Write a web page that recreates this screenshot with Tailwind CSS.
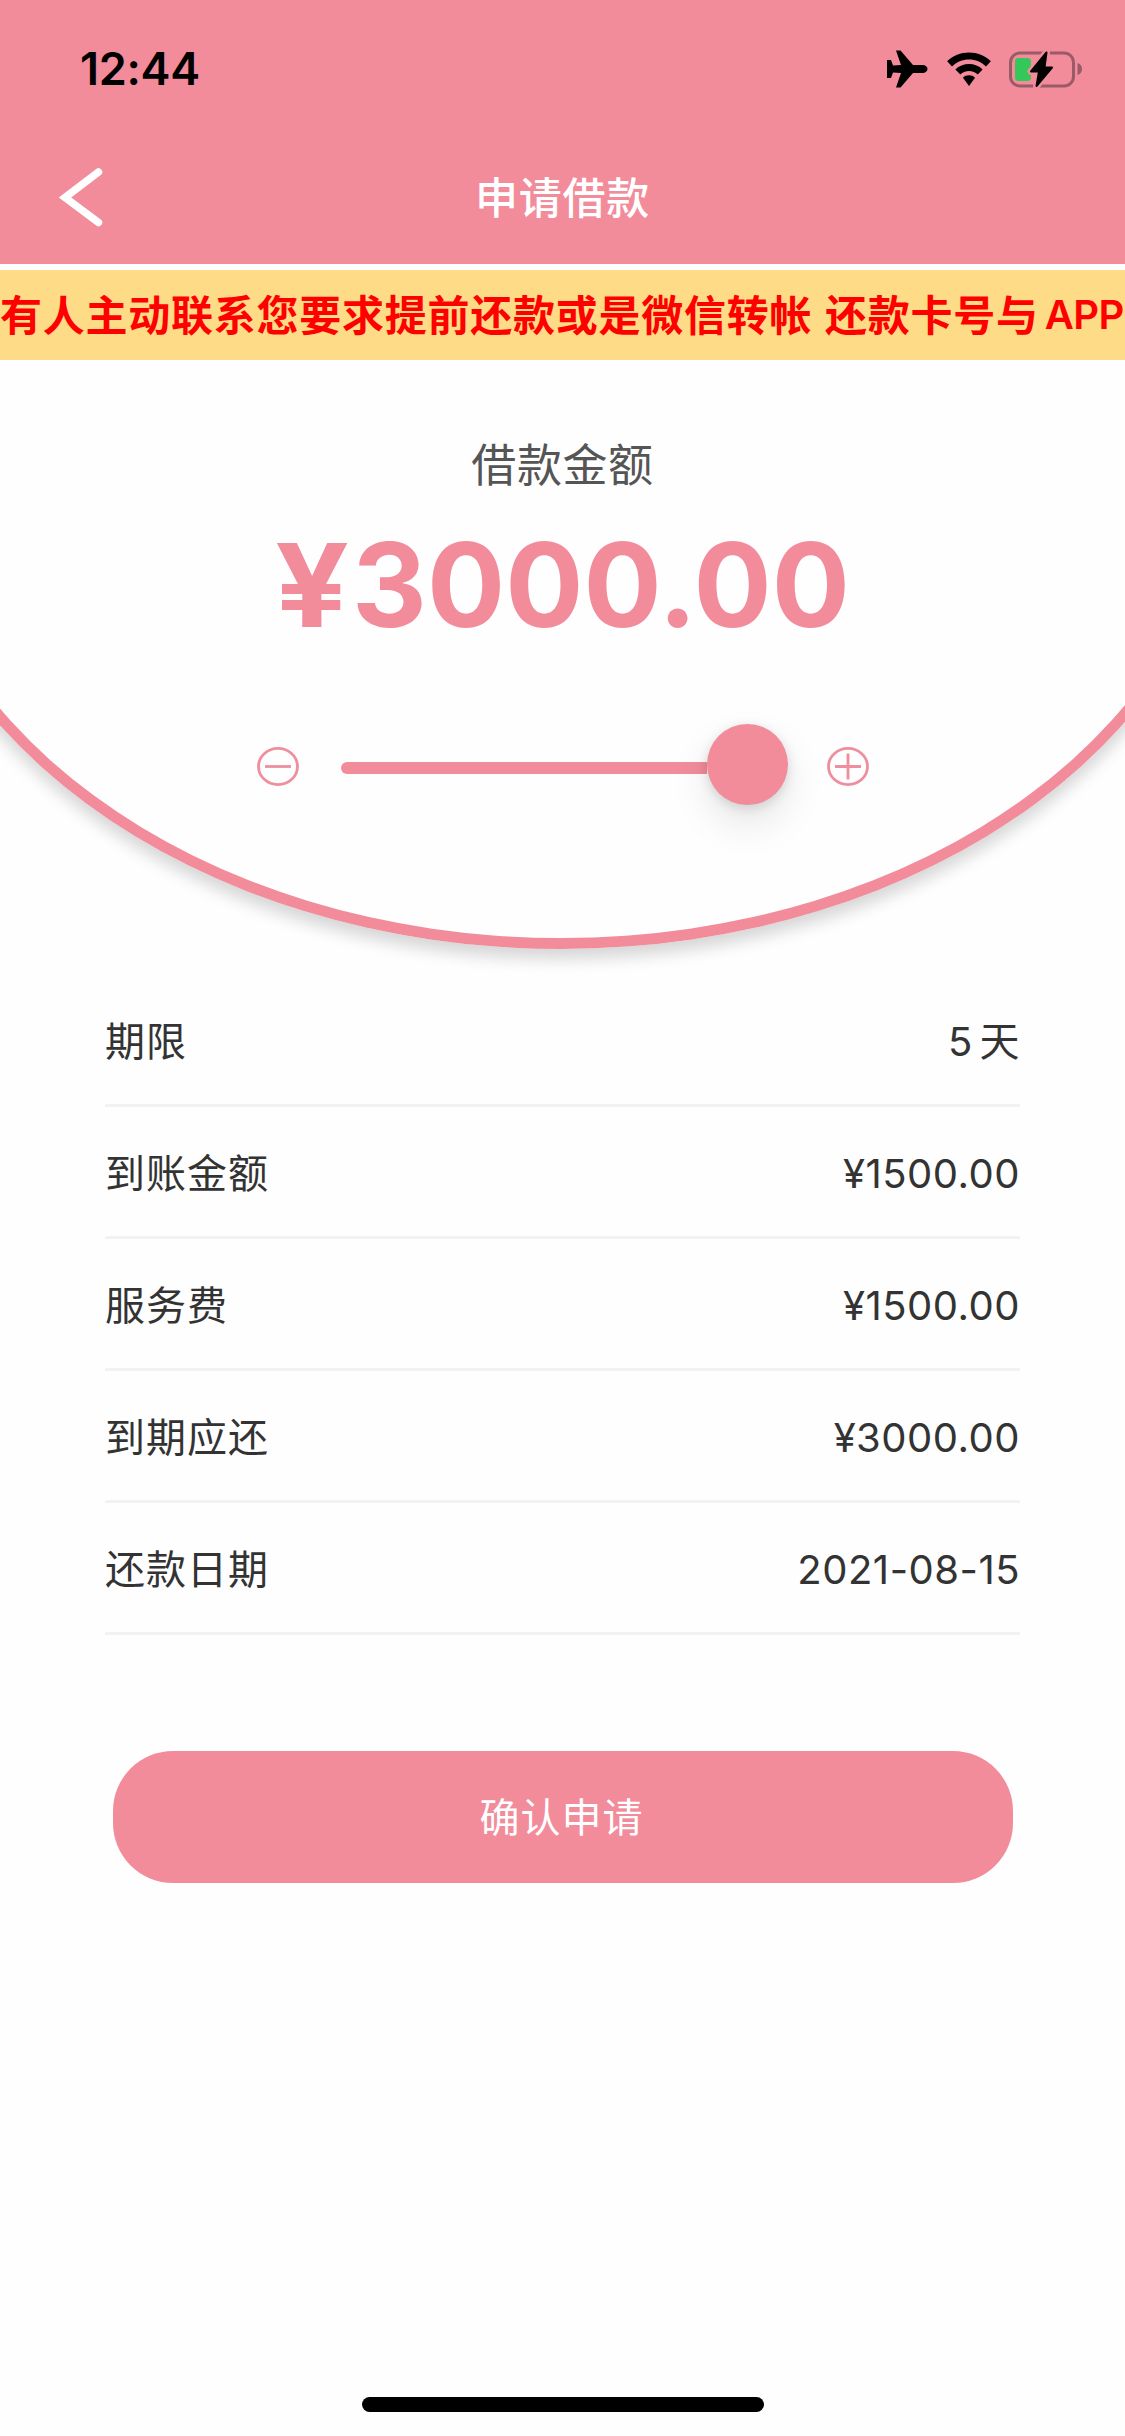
<!DOCTYPE html>
<html lang="zh-CN">
<head>
    <meta charset="UTF-8">
    <meta name="viewport" content="width=device-width, initial-scale=1.0">
    <title>申请借款</title>
    <script src="https://cdn.jsdelivr.net/npm/@tailwindcss/browser@4"></script>
</head>
<body class="flex h-[2436px] w-[1125px] flex-col overflow-hidden bg-[#fefefe] font-['Inter','Noto_Sans_CJK_SC',sans-serif] text-[#333333]">
    <!-- Header -->
    <header class="h-[264px] shrink-0 bg-[#f28c9b]">
        <div class="flex h-[132px] items-center justify-between pt-[6px] pr-[43px] pl-[80px] text-black">
            <span class="text-[45px] font-semibold tracking-[-0.3px]">12:44</span>
            <div class="flex items-center">
                <!-- Airplane -->
                <svg class="h-[40px] w-[42px]" viewBox="0 0 42 40">
                    <path d="M10 1.500h4.500L27 16h9.500c3 0 5 2 5 4s-2 4-5 4H27L14.500 38.500H10l5-14.500-8-.6L5 29H1V11h4l2 5.600 8-.6z" fill="#000" />
                </svg>
                <!-- Wifi -->
                <svg class="ml-[18px] h-[35px] w-[46px]" viewBox="0 0 46 36">
                    <path d="M23 0.500C14.500 0.500 6.500 3.700 0.500 9.500l5 5.300C10.200 10.300 16.300 7.600 23 7.600s12.800 2.700 17.500 7.200l5-5.300C39.500 3.700 31.500 0.500 23 0.500z" fill="#000" />
                    <path d="M23 12.300c-5.400 0-10.300 2-14 5.600l5 5.300c2.400-2.300 5.500-3.700 9-3.700s6.600 1.400 9 3.700l5-5.300c-3.700-3.600-8.600-5.600-14-5.600z" fill="#000" />
                    <path d="M23 24c-2.400 0-4.500.9-6.200 2.400L23 35l6.200-8.600C27.500 24.900 25.400 24 23 24z" fill="#000" />
                </svg>
                <!-- Battery -->
                <svg class="ml-[16px] h-[40px] w-[74px]" viewBox="0 0 74 40">
                    <rect x="2.500" y="4" width="63" height="33" rx="9.500" fill="none" stroke="#9a5a66" stroke-width="3" />
                    <path d="M69.500 14c3 .8 4.500 3.300 4.500 6s-1.500 5.200-4.500 6z" fill="#9a5a66" />
                    <rect x="7" y="9" width="16" height="23" rx="3.500" fill="#34c759" />
                    <path d="M38.500 3.500L23 22.500h8L28.500 37 44 18.500H36.500z" fill="#000" stroke="#f28c9b" stroke-width="7" stroke-linejoin="round" paint-order="stroke" />
                    <path d="M38.500 3.500L23 22.500h8L28.500 37 44 18.500H36.500z" fill="#000" stroke="#000" stroke-width="2" stroke-linejoin="round" />
                </svg>
            </div>
        </div>
        <div class="grid h-[132px] grid-cols-3 items-center">
            <svg class="ml-[58px] h-[62px] w-[48px]" viewBox="0 0 48 62">
                <path d="M40.500 5L7 30.500 40.500 55.500" fill="none" stroke="#fff" stroke-width="7.500" stroke-linecap="round" />
            </svg>
            <h1 class="text-center text-[43px] font-medium tracking-[0.7px] text-white">申请借款</h1>
        </div>
    </header>

    <!-- Scrolling notice -->
    <div class="mt-[6px] flex h-[90px] shrink-0 items-center overflow-hidden bg-[#fedb86] text-[42px] font-bold tracking-[0.75px] whitespace-nowrap text-[#ff0000]">
        <p class="[word-spacing:2px]">有人主动联系您要求提前还款或是微信转帐 还款卡号与</p>
        <p class="ml-[6px] text-[40px] font-semibold tracking-[-0.5px]">APP</p>
    </div>

    <!-- Amount -->
    <section class="-mb-[40px] h-[640px] shrink-0 overflow-hidden">
        <div class="-ml-[111px] flex h-[589px] w-[1344px] flex-col items-center rounded-b-[672px_498px] border-x-[11px] border-b-[11px] border-[#f28c9b] pt-[73px] pl-[3px] shadow-[0_10px_16px_rgba(0,0,0,0.16)]">
            <p class="text-[45px] leading-[66px] tracking-[0.6px] text-[#555555]">借款金额</p>
            <p class="mt-[19px] text-[116px] leading-[134px] font-bold text-[#f28c9b]"><span class="mr-[11px] inline-block origin-left scale-x-112">¥</span>3000.00</p>
            <div class="mt-[72px] flex h-[81px] items-center">
                <svg class="mt-[4px] h-[39px] w-[42px]" viewBox="0 0 42 39" fill="none" stroke="#ef8f9d" stroke-width="2.800">
                    <ellipse cx="21" cy="19.500" rx="19.500" ry="18.100" />
                    <path d="M8 19.500h26" />
                </svg>
                <div class="ml-[42px] flex w-[447px] items-center">
                    <div class="mt-[7px] h-[12px] grow rounded-l-[6px] bg-[#f28c9b]"></div>
                    <div class="size-[81px] rounded-full bg-[#f28c9b] shadow-[0_18px_39px_rgba(0,0,0,0.1),0_3px_12px_rgba(0,0,0,0.13)]"></div>
                </div>
                <svg class="mt-[4px] ml-[39px] h-[39px] w-[42px]" viewBox="0 0 42 39" fill="none" stroke="#ef8f9d" stroke-width="2.800">
                    <ellipse cx="21" cy="19.500" rx="19.500" ry="18.100" />
                    <path d="M8 19.500h26M21 6.500v26" />
                </svg>
            </div>
        </div>
    </section>

    <!-- Loan details -->
    <dl class="mx-[105px] mt-[15px] shrink-0 text-[40px] tracking-[0.5px]">
        <div class="flex h-[132px] items-center justify-between border-b-3 border-[#f2f2f2] pt-[4px]">
            <dt class="tracking-[1px]">期限</dt>
            <dd class="[word-spacing:-5px]">5 天</dd>
        </div>
        <div class="flex h-[132px] items-center justify-between border-b-3 border-[#f2f2f2] pt-[4px]">
            <dt class="tracking-[1px]">到账金额</dt>
            <dd>¥1500.00</dd>
        </div>
        <div class="flex h-[132px] items-center justify-between border-b-3 border-[#f2f2f2] pt-[4px]">
            <dt class="tracking-[1px]">服务费</dt>
            <dd>¥1500.00</dd>
        </div>
        <div class="flex h-[132px] items-center justify-between border-b-3 border-[#f2f2f2] pt-[4px]">
            <dt class="tracking-[1px]">到期应还</dt>
            <dd>¥3000.00</dd>
        </div>
        <div class="flex h-[132px] items-center justify-between border-b-3 border-[#f2f2f2] pt-[4px]">
            <dt class="tracking-[1px]">还款日期</dt>
            <dd>2021-08-15</dd>
        </div>
    </dl>

    <button type="button" class="mx-auto mt-[116px] h-[132px] w-[900px] shrink-0 rounded-[60px] bg-[#f28c9b] pt-[2px] pr-[2px] text-[40px] tracking-[1px] text-white">确认申请</button>

    <!-- Home indicator -->
    <div class="mx-auto mt-auto mb-[24px] h-[15px] w-[402px] shrink-0 rounded-full bg-black"></div>
</body>
</html>
